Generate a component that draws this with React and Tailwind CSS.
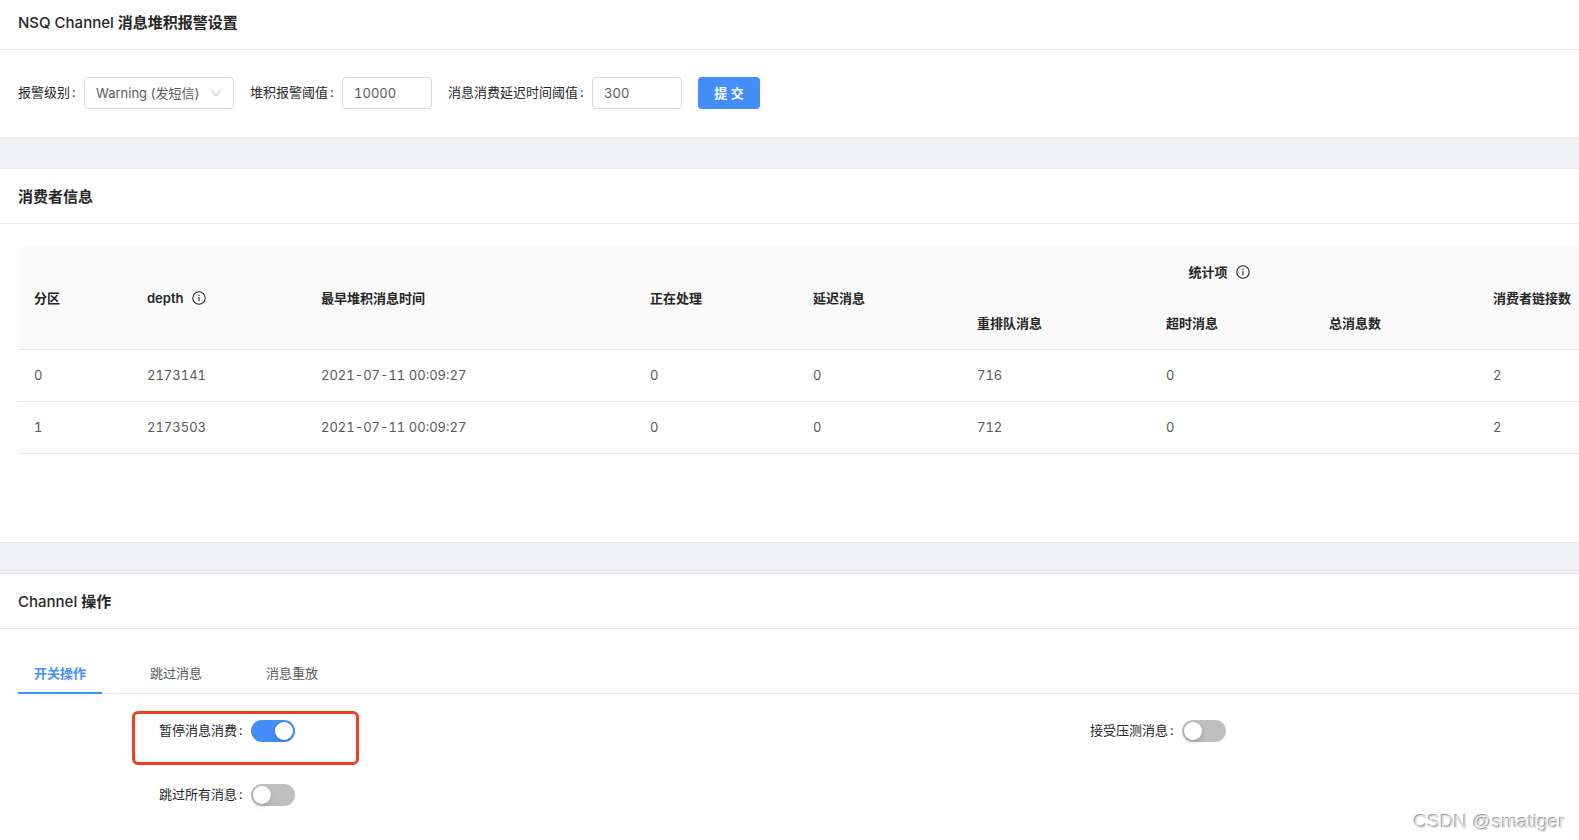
import { useState } from 'react';

const HEADS = ['最早堆积消息时间', '正在处理', '延迟消息'];

const ROWS = [
  { id: 0, depth: 2173141, time: '2021-07-11 00:09:27', inFlight: 0, deferred: 0, requeue: 716, timeout: 0, total: '', clients: 2 },
  { id: 1, depth: 2173503, time: '2021-07-11 00:09:27', inFlight: 0, deferred: 0, requeue: 712, timeout: 0, total: '', clients: 2 },
];

const TABS = ['开关操作', '跳过消息', '消息重放'];

function InfoIcon() {
  return (
    <svg viewBox="0 0 14 14" className="w-[14px] h-[14px] shrink-0" fill="none" stroke="currentColor" aria-hidden="true">
      <circle cx="7" cy="7" r="6.2" strokeWidth="1.1" />
      <path d="M7 6.1v4.1" strokeWidth="1.1" />
      <circle cx="7" cy="4.2" r="0.7" fill="currentColor" stroke="none" />
    </svg>
  );
}

function Label({ htmlFor, children }) {
  return (
    <label htmlFor={htmlFor} className="flex shrink-0 pb-0.5 leading-5 text-[#262626]">
      {children}
      <span className="ml-0.5 mr-2 w-1">:</span>
    </label>
  );
}

function Switch({ id, label, defaultChecked }) {
  return (
    <div className="flex h-10 items-center pl-[141px]">
      <Label htmlFor={id}>{label}</Label>
      <span className="relative flex h-[22px] w-11">
        <input
          id={id}
          type="checkbox"
          role="switch"
          defaultChecked={defaultChecked}
          className="peer h-full w-full cursor-pointer appearance-none rounded-full bg-[#bfbfbf] checked:bg-[#448ef7]"
        />
        <span className="pointer-events-none absolute left-0.5 top-0.5 h-[18px] w-[18px] rounded-full bg-white shadow-[0_2px_4px_rgba(0,35,11,0.2)] peer-checked:left-6"></span>
      </span>
    </div>
  );
}

function Card({ name, title, className, headClass = 'pt-[17px]', children }) {
  return (
    <section className={`border-[#e8e8e8] bg-white ${className}`}>
      <h2 className={`${headClass} border-b border-[#e8e8e8] pb-[15px] pl-[18px] text-[15px] leading-[22px] font-semibold text-[#262626]`}>
        {name && <span className="font-medium">{name} </span>}
        {title}
      </h2>
      {children}
    </section>
  );
}

function AlarmForm() {
  const inputClass = 'h-8 w-[90px] rounded border border-[#d9d9d9] bg-white px-[11px] text-[#595959] outline-none focus:border-[#448ef7]';

  return (
    <form className="flex items-center gap-4 pt-[27px] pb-7 pl-[18px]" onSubmit={(e) => e.preventDefault()}>
      <div className="flex items-center">
        <Label htmlFor="level">报警级别</Label>
        <div className="relative">
          <select id="level" className="block h-8 w-[150px] appearance-none rounded border border-[#d9d9d9] bg-white px-[11px] text-[#595959] outline-none">
            <option>Warning (发短信)</option>
          </select>
          <svg viewBox="0 0 12 12" className="pointer-events-none absolute right-3 top-[10px] h-3 w-3" fill="none" stroke="#bfbfbf" aria-hidden="true">
            <path d="M1.2 2.2 6 9l4.8-6.8" />
          </svg>
        </div>
      </div>
      <div className="flex items-center">
        <Label htmlFor="depth">堆积报警阈值</Label>
        <input id="depth" className={inputClass} defaultValue="10000" />
      </div>
      <div className="flex items-center">
        <Label htmlFor="delay">消息消费延迟时间阈值</Label>
        <input id="delay" className={inputClass} defaultValue="300" />
      </div>
      <button type="submit" className="h-8 w-[62px] rounded bg-[#448ef7] font-semibold text-white">提 交</button>
    </form>
  );
}

function ConsumerTable() {
  return (
    <div className="overflow-hidden pt-[23px] pb-[88px] pl-[18px]">
      <table className="w-full table-fixed border-separate border-spacing-0 whitespace-nowrap text-left">
        <colgroup>
          <col className="w-[113px]" />
          <col className="w-[174px]" />
          <col className="w-[329px]" />
          <col className="w-[163px]" />
          <col className="w-[164px]" />
          <col className="w-[189px]" />
          <col className="w-[163px]" />
          <col className="w-[164px]" />
          <col className="w-[102px]" />
        </colgroup>
        <thead className="text-[#262626] [&_th]:bg-[#fafafa] [&_th]:pl-4 [&_th]:font-semibold">
          <tr className="h-[51px]">
            <th rowSpan={2} className="rounded-tl border-b border-[#e8e8e8]">分区</th>
            <th rowSpan={2} className="border-b border-[#e8e8e8]">
              <span className="flex items-center gap-2">depth <InfoIcon /></span>
            </th>
            {HEADS.map((h) => (
              <th key={h} rowSpan={2} className="border-b border-[#e8e8e8]">{h}</th>
            ))}
            <th colSpan={3} className="pr-4 pb-0.5">
              <span className="flex items-center justify-center gap-2">统计项 <InfoIcon /></span>
            </th>
            <th rowSpan={2} className="border-b border-[#e8e8e8]">消费者链接数</th>
          </tr>
          <tr className="h-[52px]">
            <th className="border-b border-[#e8e8e8] pb-0.5">重排队消息</th>
            <th className="border-b border-[#e8e8e8] pb-0.5">超时消息</th>
            <th className="border-b border-[#e8e8e8] pb-0.5">总消息数</th>
          </tr>
        </thead>
        <tbody className="text-[#595959]">
          {ROWS.map((row) => (
            <tr key={row.id} className="h-[52px]">
              {Object.entries(row).map(([key, value]) => (
                <td key={key} className="border-b border-[#e8e8e8] pl-4 pb-0.5">{value}</td>
              ))}
            </tr>
          ))}
        </tbody>
      </table>
    </div>
  );
}

function ChannelActions() {
  const [tab, setTab] = useState(0);

  return (
    <div className="pt-6 pl-[18px]">
      <div role="tablist" className="flex gap-8 border-b border-[#e8e8e8]">
        {TABS.map((name, i) => (
          <button
            key={name}
            type="button"
            role="tab"
            aria-selected={i === tab}
            onClick={() => setTab(i)}
            className={`-mb-px h-[41px] border-b-2 px-4 ${i === tab ? 'border-[#448ef7] font-semibold text-[#448ef7]' : 'border-transparent text-[#595959]'}`}
          >
            {name}
          </button>
        ))}
      </div>
      <div className="relative grid grid-cols-[931fr_630fr] gap-y-6 pt-[17px]">
        <Switch id="pause" label="暂停消息消费" defaultChecked />
        <Switch id="stress" label="接受压测消息" />
        <Switch id="skip" label="跳过所有消息" />
        {/* highlight around the pause switch */}
        <div className="pointer-events-none absolute left-[114px] top-[17px] h-[54px] w-[227px] rounded-md border-3 border-[#ee4023]"></div>
      </div>
    </div>
  );
}

export default function App() {
  return (
    <main className="relative min-h-screen overflow-hidden bg-white font-['Inter','Noto_Sans_CJK_SC',sans-serif] text-[13px] leading-5 tabular-nums">
      <div className="flex flex-col gap-[30px] bg-[#eff1f5]">
        <Card name="NSQ Channel" title="消息堆积报警设置" className="border-b" headClass="pt-3">
          <AlarmForm />
        </Card>
        <Card title="消费者信息" className="border-y">
          <ConsumerTable />
        </Card>
        <Card name="Channel" title="操作" className="border-t">
          <ChannelActions />
        </Card>
      </div>
      <p className="absolute right-3.5 bottom-1 font-['Liberation_Sans',sans-serif] text-[19px] leading-7 text-[#e0e0e0] [text-shadow:-1px_-1px_0_#9a9a9a]">
        CSDN @smatiger
      </p>
    </main>
  );
}
